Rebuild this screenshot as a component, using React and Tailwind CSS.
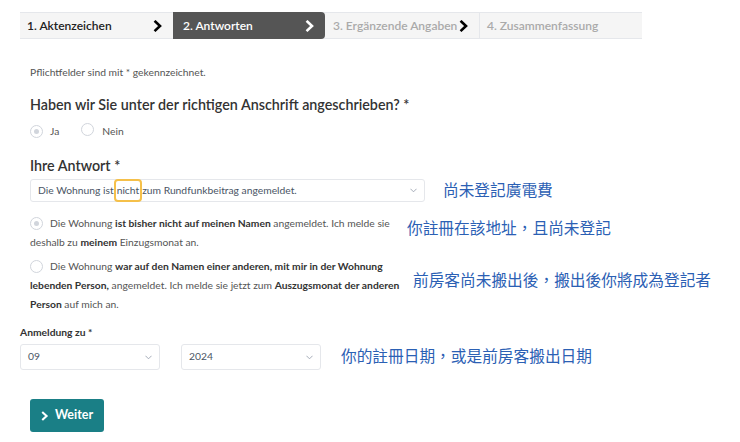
import React from 'react';

const font = { fontFamily: 'Lato, "Noto Sans", sans-serif' };

const Chevron = ({ className }) => (
  <svg viewBox="0 0 10 12" className={className} fill="none" stroke="currentColor" strokeWidth="2.6" strokeLinecap="square">
    <path d="M2.5 1.8 L7 6 L2.5 10.2" />
  </svg>
);

const Radio = ({ checked }) => (
  <span className="inline-flex items-center justify-center w-[13px] h-[13px] rounded-full border border-gray-300 bg-white shrink-0">
    {checked && <span className="w-[5px] h-[5px] rounded-full bg-gray-300" />}
  </span>
);

const SelectBox = ({ value, className, children }) => (
  <div className={`relative flex items-center border border-gray-200 rounded-[3px] bg-white px-[7px] text-[10.3px] text-gray-600 ${className}`}>
    {children || value}
    <svg viewBox="0 0 8 5" className="absolute right-[7px] w-[7px] h-[5px] text-gray-400" fill="none" stroke="currentColor" strokeWidth="1">
      <path d="M0.5 0.5 L4 4 L7.5 0.5" />
    </svg>
  </div>
);

const Note = ({ children, className }) => (
  <span
    className={`text-[15.7px] leading-[20px] text-[#2b60b4] whitespace-nowrap ${className}`}
    style={{ fontFamily: '"Noto Sans CJK TC", "Noto Sans CJK SC", sans-serif' }}
  >
    {children}
  </span>
);

export default function App() {
  return (
    <div className="w-[740px] h-[442px] bg-white overflow-hidden" style={font}>
      {/* Steps */}
      <div className="pt-[12px] pl-[20px]">
        <div className="flex w-[622px] h-[27px] border-y border-gray-200 bg-[#f5f5f5] text-[12px] font-semibold">
          <div className="w-[153px] flex items-center justify-between pl-[7px] pr-[10px] text-[#222]">
            <span>1. Aktenzeichen</span>
            <Chevron className="w-[10px] h-[12px] text-black" />
          </div>
          <div className="w-[152px] -my-px flex items-center justify-between pl-[10px] pr-[10px] bg-[#555] text-white rounded-r-[4px]">
            <span>2. Antworten</span>
            <Chevron className="w-[10px] h-[12px] text-white" />
          </div>
          <div className="w-[155px] flex items-center justify-between pl-[8px] pr-[10px] text-[#aaa] border-r border-gray-200">
            <span>3. Ergänzende Angaben</span>
            <Chevron className="w-[10px] h-[12px] text-black" />
          </div>
          <div className="flex-1 flex items-center pl-[7px] text-[#aaa]">
            <span>4. Zusammenfassung</span>
          </div>
        </div>
      </div>

      <div className="pl-[30px] pt-[26px] text-[#444]">
        <p className="text-[10.3px] leading-[15px] text-[#555]">Pflichtfelder sind mit * gekennzeichnet.</p>

        <h2 className="mt-[15px] text-[14.3px] leading-[20px] font-semibold text-[#333]">
          Haben wir Sie unter der richtigen Anschrift angeschrieben? *
        </h2>
        <div className="mt-[8px] flex items-center text-[10.3px] leading-[13px] text-[#555]">
          <Radio checked />
          <span className="ml-[7px]">Ja</span>
          <span className="ml-[22px]"><Radio /></span>
          <span className="ml-[8px]">Nein</span>
        </div>

        <h2 className="mt-[17px] text-[14.3px] leading-[20px] font-semibold text-[#333]">Ihre Antwort *</h2>
        <div className="mt-[3px] flex items-center">
          <SelectBox className="w-[395px] h-[23px]">
            <span>
              Die Wohnung ist
              <span className="inline-block border-2 border-[#f5c04a] rounded-[4px] px-px -my-[4px] py-[2px]">nicht</span>
              zum Rundfunkbeitrag angemeldet.
            </span>
          </SelectBox>
          <Note className="ml-[18px] -mt-[2px]">尚未登記廣電費</Note>
        </div>

        <div className="mt-[12px] flex">
          <div className="w-[372px] shrink-0 text-[10.3px] leading-[19px] text-[#555]">
            <p>
              <span className="inline-flex align-middle mr-[7px] -mt-[2px]"><Radio checked /></span>
              Die Wohnung <b className="text-[#333]">ist bisher nicht auf meinen Namen</b> angemeldet. Ich melde sie deshalb zu <b className="text-[#333]">meinem</b> Einzugsmonat an.
            </p>
            <p className="mt-[5px]">
              <span className="inline-flex align-middle mr-[7px] -mt-[2px]"><Radio /></span>
              Die Wohnung <b className="text-[#333]">war auf den Namen einer anderen, mit mir in der Wohnung lebenden Person,</b> angemeldet. Ich melde sie jetzt zum <b className="text-[#333]">Auszugsmonat der anderen Person</b> auf mich an.
            </p>
          </div>
          <div className="flex flex-col">
            <Note className="ml-[5px] mt-[4px]">你註冊在該地址，且尚未登記</Note>
            <Note className="ml-[11px] mt-[32px]">前房客尚未搬出後，搬出後你將成為登記者</Note>
          </div>
        </div>
      </div>

      <div className="pl-[20px] mt-[11px]">
        <p className="text-[10.3px] leading-[15px] font-bold text-[#333]">Anmeldung zu *</p>
        <div className="mt-[4px] flex items-center">
          <SelectBox className="w-[140px] h-[26px]" value="09" />
          <SelectBox className="ml-[21px] w-[140px] h-[26px]" value="2024" />
          <Note className="ml-[20px] -mt-[2px]">你的註冊日期，或是前房客搬出日期</Note>
        </div>
        <button className="ml-[10px] mt-[29px] flex items-center gap-[6px] h-[33px] w-[74px] justify-center rounded-[3px] bg-[#1a7f86] text-white text-[12.5px] font-bold">
          <Chevron className="w-[8px] h-[10px] text-white" />
          Weiter
        </button>
      </div>
    </div>
  );
}
